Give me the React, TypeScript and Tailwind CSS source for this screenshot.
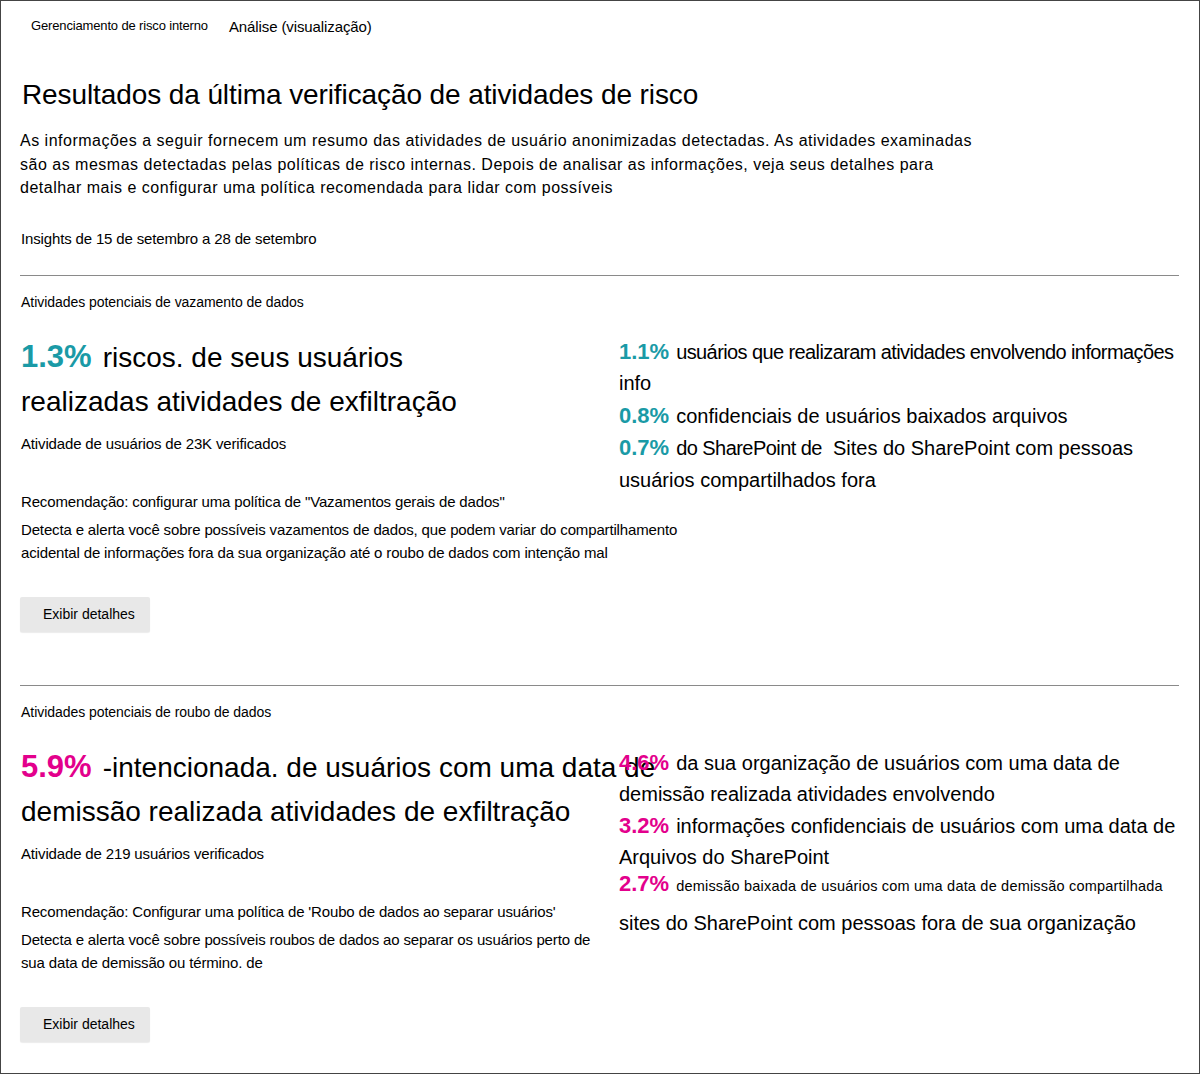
const teal = "text-[#1a9aa6]";
const pink = "text-[#e3008c]";

const Pct = ({ value, color }: { value: string; color: string }) => (
  <span className={`${color} font-bold text-[22px] mr-[7px]`}>{value}</span>
);

const DetailsButton = () => (
  <button className="w-[130px] h-[35px] pl-[23px] text-left bg-[#e8e8e8] rounded-[2px] text-[14px] text-black shadow-[0_1px_1px_rgba(0,0,0,0.08)]">
    Exibir detalhes
  </button>
);

type Block = {
  color: string;
  pct: string;
  line1: string;
  line2: string;
  checked: string;
  rec: string;
  desc1: string;
  desc2: string;
};

const LeftColumn = ({ b }: { b: Block }) => (
  <div className="whitespace-nowrap">
    <div className="text-[28px] leading-[44px]">
      <span className={`${b.color} font-bold text-[31px] leading-[44px] mr-[11px]`}>{b.pct}</span>
      {b.line1}
      <br />
      {b.line2}
    </div>
    <div className="mt-[10px] text-[15px] leading-[20px] tracking-[-0.15px]">{b.checked}</div>
    <div className="mt-[38px] text-[15px] leading-[20px] tracking-[-0.15px]">{b.rec}</div>
    <div className="mt-[6px] text-[15px] leading-[23px] tracking-[-0.15px]">
      {b.desc1}
      <br />
      {b.desc2}
    </div>
    <div className="mt-[33px] -ml-[1px]">
      <DetailsButton />
    </div>
  </div>
);

const leak: Block = {
  color: teal,
  pct: "1.3%",
  line1: "riscos. de seus usuários",
  line2: "realizadas atividades de exfiltração",
  checked: "Atividade de usuários de 23K verificados",
  rec: 'Recomendação: configurar uma política de "Vazamentos gerais de dados"',
  desc1: "Detecta e alerta você sobre possíveis vazamentos de dados, que podem variar do compartilhamento",
  desc2: "acidental de informações fora da sua organização até o roubo de dados com intenção mal",
};

const theft: Block = {
  color: pink,
  pct: "5.9%",
  line1: "-intencionada. de usuários com uma data de",
  line2: "demissão realizada atividades de exfiltração",
  checked: "Atividade de 219 usuários verificados",
  rec: "Recomendação: Configurar uma política de 'Roubo de dados ao separar usuários'",
  desc1: "Detecta e alerta você sobre possíveis roubos de dados ao separar os usuários perto de",
  desc2: "sua data de demissão ou término. de",
};

export default function App() {
  return (
    <div className="w-[1200px] h-[1074px] border border-[#444] bg-white font-['Liberation_Sans',Arial,sans-serif] text-black overflow-hidden">
      {/* breadcrumb */}
      <div className="flex items-center gap-[21px] pl-[30px] pt-[16px] h-[34px]">
        <span className="text-[13px] leading-[18px] tracking-[-0.15px]">Gerenciamento de risco interno</span>
        <span className="text-[15px] leading-[18px] mt-[2px] tracking-[-0.1px]">Análise (visualização)</span>
      </div>

      <div className="px-[19px]">
        <h1 className="mt-[42px] ml-[2px] text-[28px] leading-[36px] tracking-[-0.1px]">
          Resultados da última verificação de atividades de risco
        </h1>
        <p className="mt-[16px] text-[16px] leading-[23.5px] tracking-[0.5px] whitespace-nowrap">
          As informações a seguir fornecem um resumo das atividades de usuário anonimizadas detectadas. As atividades examinadas
          <br />
          são as mesmas detectadas pelas políticas de risco internas. Depois de analisar as informações, veja seus detalhes para
          <br />
          detalhar mais e configurar uma política recomendada para lidar com possíveis
        </p>
        <div className="mt-[29px] ml-[1px] text-[15px] leading-[20px] tracking-[-0.15px]">
          Insights de 15 de setembro a 28 de setembro
        </div>

        <hr className="mt-[26px] border-t border-[#8a8a8a] mr-[1px]" />

        {/* Section 1 */}
        <div className="mt-[17px] ml-[1px] text-[14px] leading-[18px] tracking-[-0.05px]">
          Atividades potenciais de vazamento de dados
        </div>
        <div className="grid grid-cols-[598px_1fr] mt-[24px] ml-[1px]">
          <LeftColumn b={leak} />
          <div className="mt-[1px] text-[20px] leading-[31.5px] whitespace-nowrap">
            <div>
              <Pct value="1.1%" color={teal} />
              <span className="tracking-[-0.6px]">usuários que realizaram atividades envolvendo informações</span>
            </div>
            <div>info</div>
            <div>
              <Pct value="0.8%" color={teal} />
              confidenciais de usuários baixados arquivos
            </div>
            <div>
              <Pct value="0.7%" color={teal} />
              <span className="tracking-[-0.55px]">do SharePoint de</span>
              <span className="ml-[11px]">Sites do SharePoint com pessoas</span>
            </div>
            <div>usuários compartilhados fora</div>
          </div>
        </div>

        <hr className="mt-[53px] border-t border-[#8a8a8a] mr-[1px]" />

        {/* Section 2 */}
        <div className="mt-[17px] ml-[1px] text-[14px] leading-[18px] tracking-[-0.05px]">
          Atividades potenciais de roubo de dados
        </div>
        <div className="grid grid-cols-[598px_1fr] mt-[24px] ml-[1px]">
          <LeftColumn b={theft} />
          <div className="mt-[2px] text-[20px] leading-[31px] whitespace-nowrap">
            <div>
              <Pct value="4.6%" color={pink} />
              da sua organização de usuários com uma data de
            </div>
            <div>demissão realizada atividades envolvendo</div>
            <div>
              <Pct value="3.2%" color={pink} />
              informações confidenciais de usuários com uma data de
            </div>
            <div>Arquivos do SharePoint</div>
            <div className="leading-[22px]">
              <Pct value="2.7%" color={pink} />
              <span className="text-[14.5px] tracking-[0.2px]">
                demissão baixada de usuários com uma data de demissão compartilhada
              </span>
            </div>
            <div className="mt-[11px]">sites do SharePoint com pessoas fora de sua organização</div>
          </div>
        </div>
      </div>
    </div>
  );
}
